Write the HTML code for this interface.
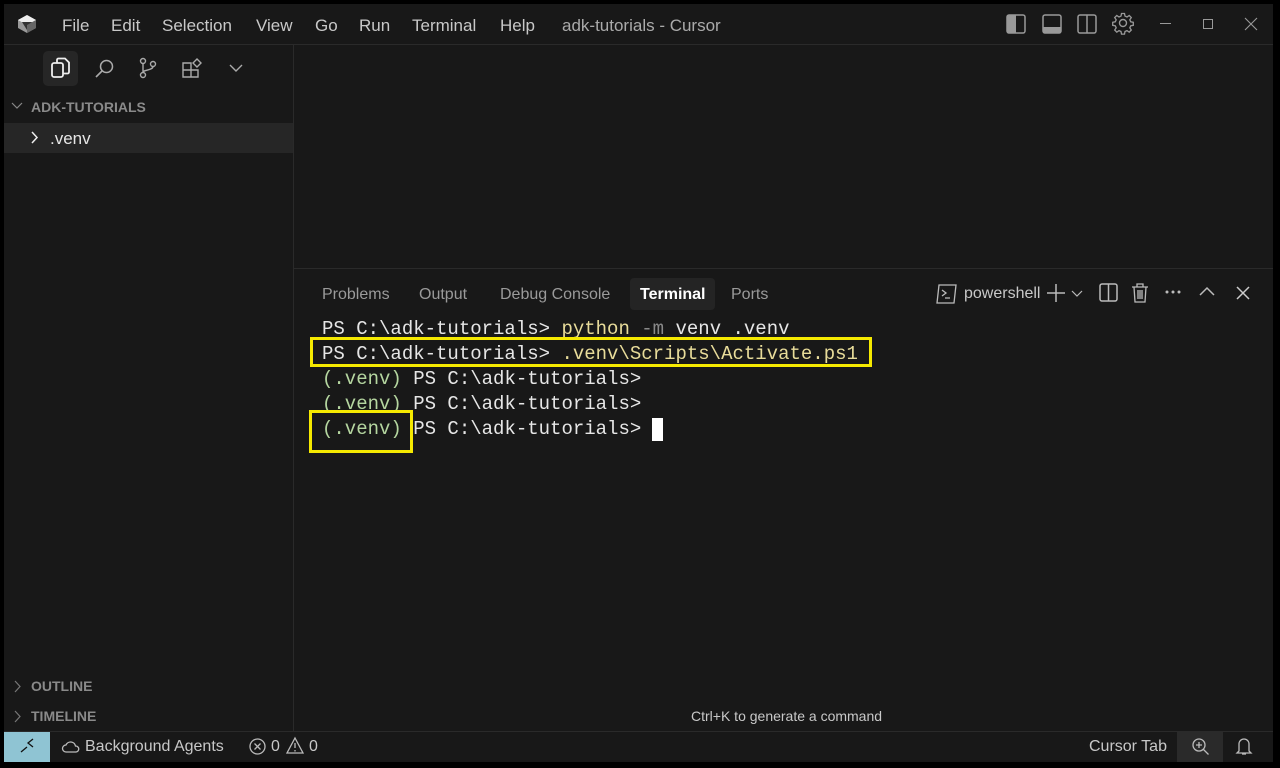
<!DOCTYPE html>
<html><head><meta charset="utf-8"><style>
*{margin:0;padding:0;box-sizing:border-box}
body{width:1280px;height:768px;background:#000;position:relative;overflow:hidden;font-family:"Liberation Sans",sans-serif;color:#ccc}
.a{position:absolute}
.win{left:4px;top:4px;width:1269px;height:758px;background:#181818}
.mono{font-family:"Liberation Mono",monospace;font-size:19px;white-space:pre;color:#e6e6e6}
.menu span{position:absolute;top:16px;font-size:17px;color:#c8c8c8}
.tab{position:absolute;top:286px;font-size:16px;color:#9a9a9a}
svg{position:absolute;overflow:visible}
</style></head><body>
<div class="a win"></div>
<div class="a" style="left:4px;top:44px;width:1269px;height:1px;background:#2a2a2a"></div>
<svg style="left:17px;top:14px" width="20" height="20" viewBox="0 0 20 20"><path d="M10 1 L19 6 L19 14 L10 19 L1 14 L1 6Z" fill="#999"/><path d="M1 6 L10 11 L19 6 L10 1Z" fill="#eee"/><path d="M5 8 L15 8 L10 16Z" fill="#333"/><path d="M10 11 L10 19 L19 14 L19 6Z" fill="#666"/></svg>
<div class="menu">
<span style="left:62px">File</span><span style="left:111px">Edit</span><span style="left:162px">Selection</span><span style="left:256px">View</span><span style="left:315px">Go</span><span style="left:359px">Run</span><span style="left:412px">Terminal</span><span style="left:500px">Help</span><span style="left:562px;color:#aaa">adk-tutorials - Cursor</span>
</div>
<svg style="left:1006px;top:14px" width="20" height="20"><rect x="1" y="1" width="18" height="18" rx="2" fill="none" stroke="#999" stroke-width="1.5"/><rect x="1" y="1" width="9" height="18" fill="#999"/></svg>
<svg style="left:1042px;top:14px" width="20" height="20"><rect x="1" y="1" width="18" height="18" rx="2" fill="none" stroke="#999" stroke-width="1.5"/><rect x="1" y="13" width="18" height="6" fill="#999"/></svg>
<svg style="left:1077px;top:14px" width="20" height="20"><rect x="1" y="1" width="18" height="18" rx="2" fill="none" stroke="#999" stroke-width="1.5"/><line x1="10" y1="1" x2="10" y2="19" stroke="#999" stroke-width="1.5"/></svg>
<svg style="left:1112px;top:12px" width="22" height="22" viewBox="0 0 22 22"><circle cx="11" cy="11" r="3.5" fill="none" stroke="#999" stroke-width="1.4"/><path d="M9.5 1.5h3l.5 2.6 2 .9 2.2-1.5 2.1 2.1-1.5 2.2.9 2 2.6.5v3l-2.6.5-.9 2 1.5 2.2-2.1 2.1-2.2-1.5-2 .9-.5 2.6h-3l-.5-2.6-2-.9-2.2 1.5-2.1-2.1 1.5-2.2-.9-2-2.6-.5v-3l2.6-.5.9-2-1.5-2.2 2.1-2.1 2.2 1.5 2-.9z" fill="none" stroke="#999" stroke-width="1.3"/></svg>
<div class="a" style="left:1160px;top:23px;width:11px;height:1px;background:#999"></div>
<div class="a" style="left:1203px;top:19px;width:10px;height:10px;border:1px solid #999"></div>
<svg style="left:1245px;top:18px" width="12" height="12"><path d="M0 0L12 12M12 0L0 12" stroke="#999" stroke-width="1.1"/></svg>
<div class="a" style="left:293px;top:45px;width:1px;height:686px;background:#2a2a2a"></div>
<div class="a" style="left:43px;top:51px;width:35px;height:35px;border-radius:5px;background:#262626"></div>
<svg style="left:50px;top:57px" width="22" height="22"><rect x="2" y="6" width="11" height="14" rx="2" fill="none" stroke="#eee" stroke-width="1.8"/><path d="M7 6V3a1.5 1.5 0 0 1 1.5-1.5H15l4 4V15a1.5 1.5 0 0 1-1.5 1.5H13" fill="none" stroke="#eee" stroke-width="1.8"/></svg>
<svg style="left:94px;top:58px" width="22" height="22"><circle cx="12.5" cy="8.5" r="6" fill="none" stroke="#aaa" stroke-width="1.5"/><line x1="8" y1="13" x2="2" y2="19" stroke="#aaa" stroke-width="1.6"/></svg>
<svg style="left:138px;top:57px" width="22" height="22"><circle cx="5" cy="4" r="2.5" fill="none" stroke="#aaa" stroke-width="1.4"/><circle cx="5" cy="18" r="2.5" fill="none" stroke="#aaa" stroke-width="1.4"/><circle cx="15" cy="7" r="2.5" fill="none" stroke="#aaa" stroke-width="1.4"/><path d="M5 6.5v9M15 9.5c0 4-10 3-10 6" fill="none" stroke="#aaa" stroke-width="1.4"/></svg>
<svg style="left:182px;top:58px" width="22" height="22"><path d="M1 5h8v14H1zM1 12h15v7H9M9 12V5" fill="none" stroke="#aaa" stroke-width="1.4"/><path d="M15 1l4 4-4 4-4-4z" fill="none" stroke="#aaa" stroke-width="1.4"/></svg>
<svg style="left:229px;top:64px" width="14" height="8"><path d="M1 1l6 6 6-6" fill="none" stroke="#aaa" stroke-width="1.4"/></svg>
<svg style="left:11px;top:102px" width="12" height="8"><path d="M1 1l5 5 5-5" fill="none" stroke="#888" stroke-width="1.2"/></svg>
<div class="a" style="left:31px;top:99px;font-size:14px;font-weight:bold;color:#8a8a8a">ADK-TUTORIALS</div>
<div class="a" style="left:4px;top:123px;width:289px;height:30px;background:#262626"></div>
<svg style="left:31px;top:131px" width="8" height="13"><path d="M1 1l5 5.5L1 12" fill="none" stroke="#eee" stroke-width="1.5"/></svg>
<div class="a" style="left:50px;top:129px;font-size:17px;color:#e6e6e6">.venv</div>
<svg style="left:14px;top:680px" width="8" height="13"><path d="M1 1l5 5.5L1 12" fill="none" stroke="#777" stroke-width="1.2"/></svg>
<div class="a" style="left:31px;top:678px;font-size:14px;font-weight:bold;color:#8a8a8a">OUTLINE</div>
<svg style="left:14px;top:710px" width="8" height="13"><path d="M1 1l5 5.5L1 12" fill="none" stroke="#777" stroke-width="1.2"/></svg>
<div class="a" style="left:31px;top:708px;font-size:14px;font-weight:bold;color:#8a8a8a">TIMELINE</div>
<div class="a" style="left:294px;top:268px;width:979px;height:1px;background:#2a2a2a"></div>
<div class="tab" style="left:322px">Problems</div>
<div class="tab" style="left:419px">Output</div>
<div class="tab" style="left:500px">Debug Console</div>
<div class="a" style="left:630px;top:278px;width:85px;height:32px;border-radius:4px;background:#242424"></div>
<div class="tab" style="left:640px;color:#fff;font-weight:bold">Terminal</div>
<div class="tab" style="left:731px">Ports</div>
<svg style="left:936px;top:283px" width="22" height="22"><path d="M3 2h17l-2 18H1z" fill="none" stroke="#bbb" stroke-width="1.3"/><path d="M6 7l4 3-4 3M9 15h5" fill="none" stroke="#bbb" stroke-width="1.3"/></svg>
<div class="a" style="left:964px;top:285px;font-size:16px;color:#c8c8c8">powershell</div>
<svg style="left:1046px;top:283px" width="20" height="20"><path d="M10 1v18M1 10h18" stroke="#bbb" stroke-width="1.5"/></svg>
<svg style="left:1071px;top:290px" width="12" height="7"><path d="M1 1l5 5 5-5" fill="none" stroke="#bbb" stroke-width="1.2"/></svg>
<svg style="left:1099px;top:283px" width="20" height="20"><rect x="1" y="1" width="17" height="17" rx="2" fill="none" stroke="#bbb" stroke-width="1.5"/><line x1="9.5" y1="1" x2="9.5" y2="18" stroke="#bbb" stroke-width="1.5"/></svg>
<svg style="left:1131px;top:283px" width="18" height="20"><path d="M1 4h16M6 4V1h6v3M3 4l1 15h10l1-15M7 7v9M9 7v9M11 7v9" fill="none" stroke="#bbb" stroke-width="1.3"/></svg>
<svg style="left:1165px;top:290px" width="16" height="5"><circle cx="2" cy="2" r="1.5" fill="#bbb"/><circle cx="8" cy="2" r="1.5" fill="#bbb"/><circle cx="14" cy="2" r="1.5" fill="#bbb"/></svg>
<svg style="left:1199px;top:286px" width="16" height="10"><path d="M1 9l7-7 7 7" fill="none" stroke="#bbb" stroke-width="1.5"/></svg>
<svg style="left:1236px;top:286px" width="14" height="14"><path d="M1 1l12 12M13 1L1 13" stroke="#ccc" stroke-width="1.5"/></svg>
<div class="a mono" style="left:322px;top:317px;line-height:25px">PS C:\adk-tutorials&gt; <span style="color:#e8dc9a">python</span> <span style="color:#8a8a8a">-m</span> venv .venv
PS C:\adk-tutorials&gt; <span style="color:#e8dc9a">.venv\Scripts\Activate.ps1</span>
<span style="color:#b5d6a0">(.venv)</span> PS C:\adk-tutorials&gt;
<span style="color:#b5d6a0">(.venv)</span> PS C:\adk-tutorials&gt;
<span style="color:#b5d6a0">(.venv)</span> PS C:\adk-tutorials&gt; </div>
<div class="a" style="left:652px;top:418px;width:11px;height:23px;background:#fff"></div>
<div class="a" style="left:310px;top:337px;width:562px;height:30px;border:3px solid #f5e900"></div>
<div class="a" style="left:309px;top:410px;width:104px;height:43px;border:3px solid #f5e900"></div>
<div class="a" style="left:691px;top:708px;font-size:14px;color:#c8c8c8">Ctrl+K to generate a command</div>
<div class="a" style="left:4px;top:731px;width:1269px;height:1px;background:#2a2a2a"></div>
<div class="a" style="left:4px;top:732px;width:46px;height:30px;background:#8fc4d3"></div>
<svg style="left:20px;top:738px" width="14" height="16"><path d="M1 14l6-5M13 1L8 5l5 4" fill="none" stroke="#111" stroke-width="1.3"/></svg>
<svg style="left:62px;top:740px" width="18" height="14"><path d="M4 12a3.5 3.5 0 0 1 0-7 5 5 0 0 1 9.5 1A3 3 0 0 1 14 12z" fill="none" stroke="#bbb" stroke-width="1.3"/></svg>
<div class="a" style="left:85px;top:738px;font-size:16px;color:#c8c8c8">Background Agents</div>
<svg style="left:249px;top:738px" width="17" height="17"><circle cx="8.5" cy="8.5" r="7.5" fill="none" stroke="#bbb" stroke-width="1.3"/><path d="M5.5 5.5l6 6M11.5 5.5l-6 6" stroke="#bbb" stroke-width="1.3"/></svg>
<div class="a" style="left:271px;top:738px;font-size:16px;color:#c8c8c8">0</div>
<svg style="left:286px;top:737px" width="18" height="17"><path d="M9 1l8 15H1z" fill="none" stroke="#bbb" stroke-width="1.3"/><path d="M9 6v5M9 13v1.5" stroke="#bbb" stroke-width="1.3"/></svg>
<div class="a" style="left:309px;top:738px;font-size:16px;color:#c8c8c8">0</div>
<div class="a" style="left:1089px;top:738px;font-size:16px;color:#c8c8c8">Cursor Tab</div>
<div class="a" style="left:1177px;top:732px;width:46px;height:30px;background:#2a2a2a"></div>
<svg style="left:1191px;top:737px" width="20" height="20"><circle cx="8" cy="8" r="6" fill="none" stroke="#bbb" stroke-width="1.3"/><path d="M8 5v6M5 8h6M12.5 12.5l5 5" stroke="#bbb" stroke-width="1.3"/></svg>
<svg style="left:1236px;top:737px" width="16" height="19"><path d="M3 14V7a5 5 0 0 1 10 0v7l2 2H1z" fill="none" stroke="#bbb" stroke-width="1.3"/><path d="M6 17h4" stroke="#bbb" stroke-width="1.3"/></svg>
</body></html>
